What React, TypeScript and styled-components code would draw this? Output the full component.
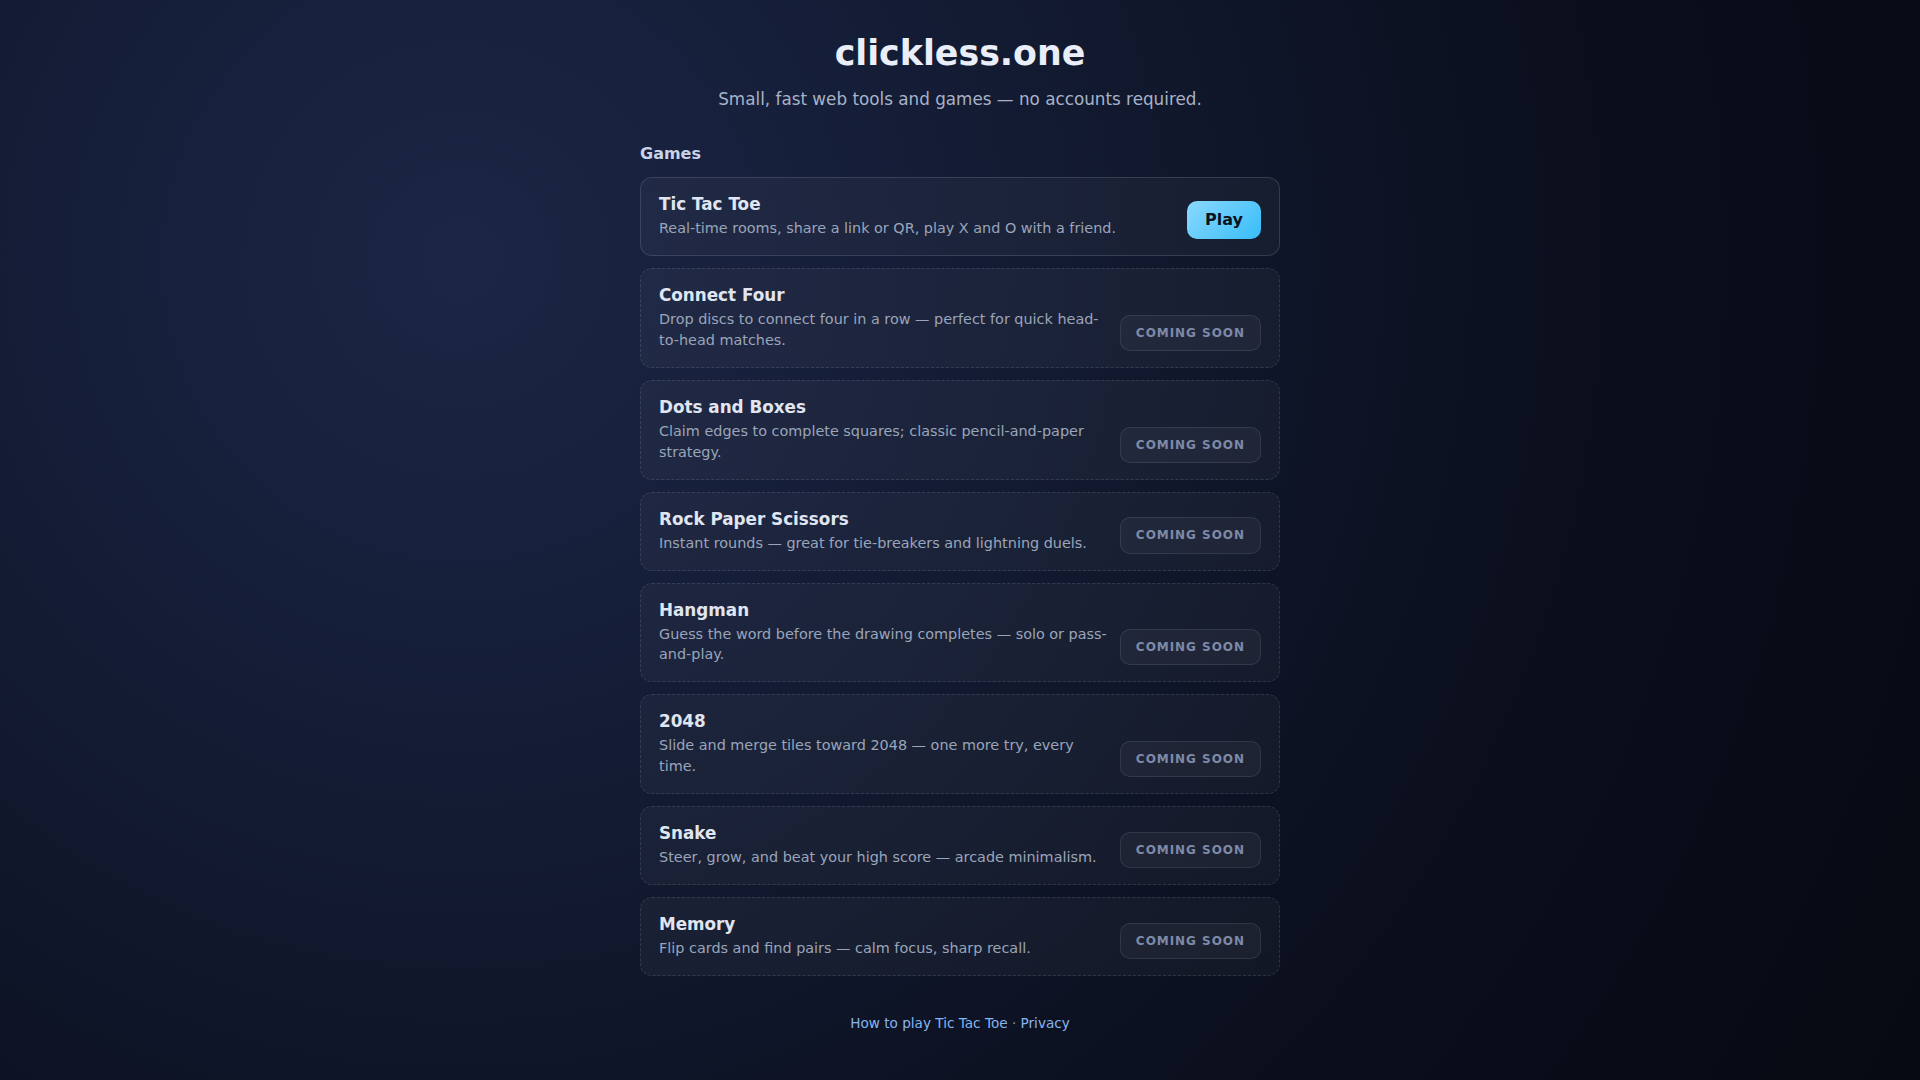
import React from "react";
import styled, { createGlobalStyle } from "styled-components";

const GlobalStyle = createGlobalStyle`
  * { box-sizing: border-box; }
  html, body {
    margin: 0;
    padding: 0;
    min-height: 100%;
  }
  body {
    font-family: "DejaVu Sans", "Noto Sans", sans-serif;
    color: #e6ebf5;
    background-color: #080b15;
    background-image: radial-gradient(
      circle at 24% 24%,
      #1b2645 0%,
      #161f3a 22%,
      #10172b 45%,
      #0b0f1e 65%,
      #070a12 100%
    );
    background-attachment: fixed;
    min-height: 100vh;
  }
`;

const Page = styled.main`
  width: 640px;
  margin: 0 auto;
  padding: 33px 0 48px;
  display: flex;
  flex-direction: column;
`;

const Header = styled.header`
  display: flex;
  flex-direction: column;
  align-items: center;
  gap: 12px;
  margin-bottom: 32px;
`;

const Title = styled.h1`
  margin: 0;
  font-size: 34.8px;
  line-height: 1.2;
  font-weight: 700;
  color: #e9eef8;
`;

const Tagline = styled.p`
  margin: 0;
  font-size: 16.8px;
  line-height: 1.5;
  color: #a7b2c7;
`;

const SectionTitle = styled.h2`
  margin: 0 0 12.7px;
  font-size: 16px;
  line-height: 1.3;
  font-weight: 700;
  color: #c8d3e7;
`;

const List = styled.div`
  display: flex;
  flex-direction: column;
  gap: 12px;
`;

const Card = styled.article<{ $live?: boolean }>`
  display: grid;
  grid-template-columns: 1fr auto;
  align-items: end;
  column-gap: 12px;
  padding: 16px 18px;
  border-radius: 12px;
  background: rgba(255, 255, 255, 0.035);
  border: 1px ${(p) => (p.$live ? "solid" : "dashed")}
    ${(p) => (p.$live ? "rgba(148, 163, 184, 0.22)" : "rgba(148, 163, 184, 0.2)")};
`;

const Info = styled.div`
  display: flex;
  flex-direction: column;
  gap: 3px;
  min-width: 0;
`;

const GameName = styled.h3`
  margin: 0;
  font-size: 16.8px;
  line-height: 1.25;
  font-weight: 700;
  color: #e0e6f1;
`;

const Blurb = styled.p`
  margin: 0;
  font-size: 14.4px;
  line-height: 1.45;
  color: #9aa5ba;
`;

const PlayButton = styled.a`
  display: inline-flex;
  align-items: center;
  justify-content: center;
  padding: 10px 18px;
  border-radius: 10px;
  background: linear-gradient(135deg, #8ad8fd 0%, #38bdf8 100%);
  color: #0a1322;
  font-size: 16px;
  line-height: 1.16;
  font-weight: 700;
  text-decoration: none;
  cursor: pointer;
`;

const SoonTag = styled.span`
  display: inline-flex;
  align-items: center;
  justify-content: center;
  padding: 10px 15px;
  border-radius: 10px;
  background: rgba(255, 255, 255, 0.04);
  border: 1px solid rgba(148, 163, 184, 0.16);
  color: #7d8aa8;
  font-size: 12px;
  line-height: 1.18;
  font-weight: 700;
  letter-spacing: 0.08em;
  text-transform: uppercase;
  white-space: nowrap;
`;

const Footer = styled.footer`
  margin-top: 38px;
  text-align: center;
  font-size: 13.6px;
  line-height: 1.4;
  color: #8490a6;
`;

const FooterLink = styled.a`
  color: #86b6f0;
  text-decoration: none;
`;

type Game = {
  name: string;
  blurb: string;
  live?: boolean;
};

const games: Game[] = [
  {
    name: "Tic Tac Toe",
    blurb: "Real-time rooms, share a link or QR, play X and O with a friend.",
    live: true,
  },
  {
    name: "Connect Four",
    blurb: "Drop discs to connect four in a row — perfect for quick head-to-head matches.",
  },
  {
    name: "Dots and Boxes",
    blurb: "Claim edges to complete squares; classic pencil-and-paper strategy.",
  },
  {
    name: "Rock Paper Scissors",
    blurb: "Instant rounds — great for tie-breakers and lightning duels.",
  },
  {
    name: "Hangman",
    blurb: "Guess the word before the drawing completes — solo or pass-and-play.",
  },
  {
    name: "2048",
    blurb: "Slide and merge tiles toward 2048 — one more try, every time.",
  },
  {
    name: "Snake",
    blurb: "Steer, grow, and beat your high score — arcade minimalism.",
  },
  {
    name: "Memory",
    blurb: "Flip cards and find pairs — calm focus, sharp recall.",
  },
];

export default function App() {
  return (
    <>
      <GlobalStyle />
      <Page>
        <Header>
          <Title>clickless.one</Title>
          <Tagline>Small, fast web tools and games — no accounts required.</Tagline>
        </Header>

        <section>
          <SectionTitle>Games</SectionTitle>
          <List>
            {games.map((g) => (
              <Card key={g.name} $live={g.live}>
                <Info>
                  <GameName>{g.name}</GameName>
                  <Blurb>{g.blurb}</Blurb>
                </Info>
                {g.live ? (
                  <PlayButton href="#">Play</PlayButton>
                ) : (
                  <SoonTag>Coming soon</SoonTag>
                )}
              </Card>
            ))}
          </List>
        </section>

        <Footer>
          <FooterLink href="#">How to play Tic Tac Toe</FooterLink> ·{" "}
          <FooterLink href="#">Privacy</FooterLink>
        </Footer>
      </Page>
    </>
  );
}
